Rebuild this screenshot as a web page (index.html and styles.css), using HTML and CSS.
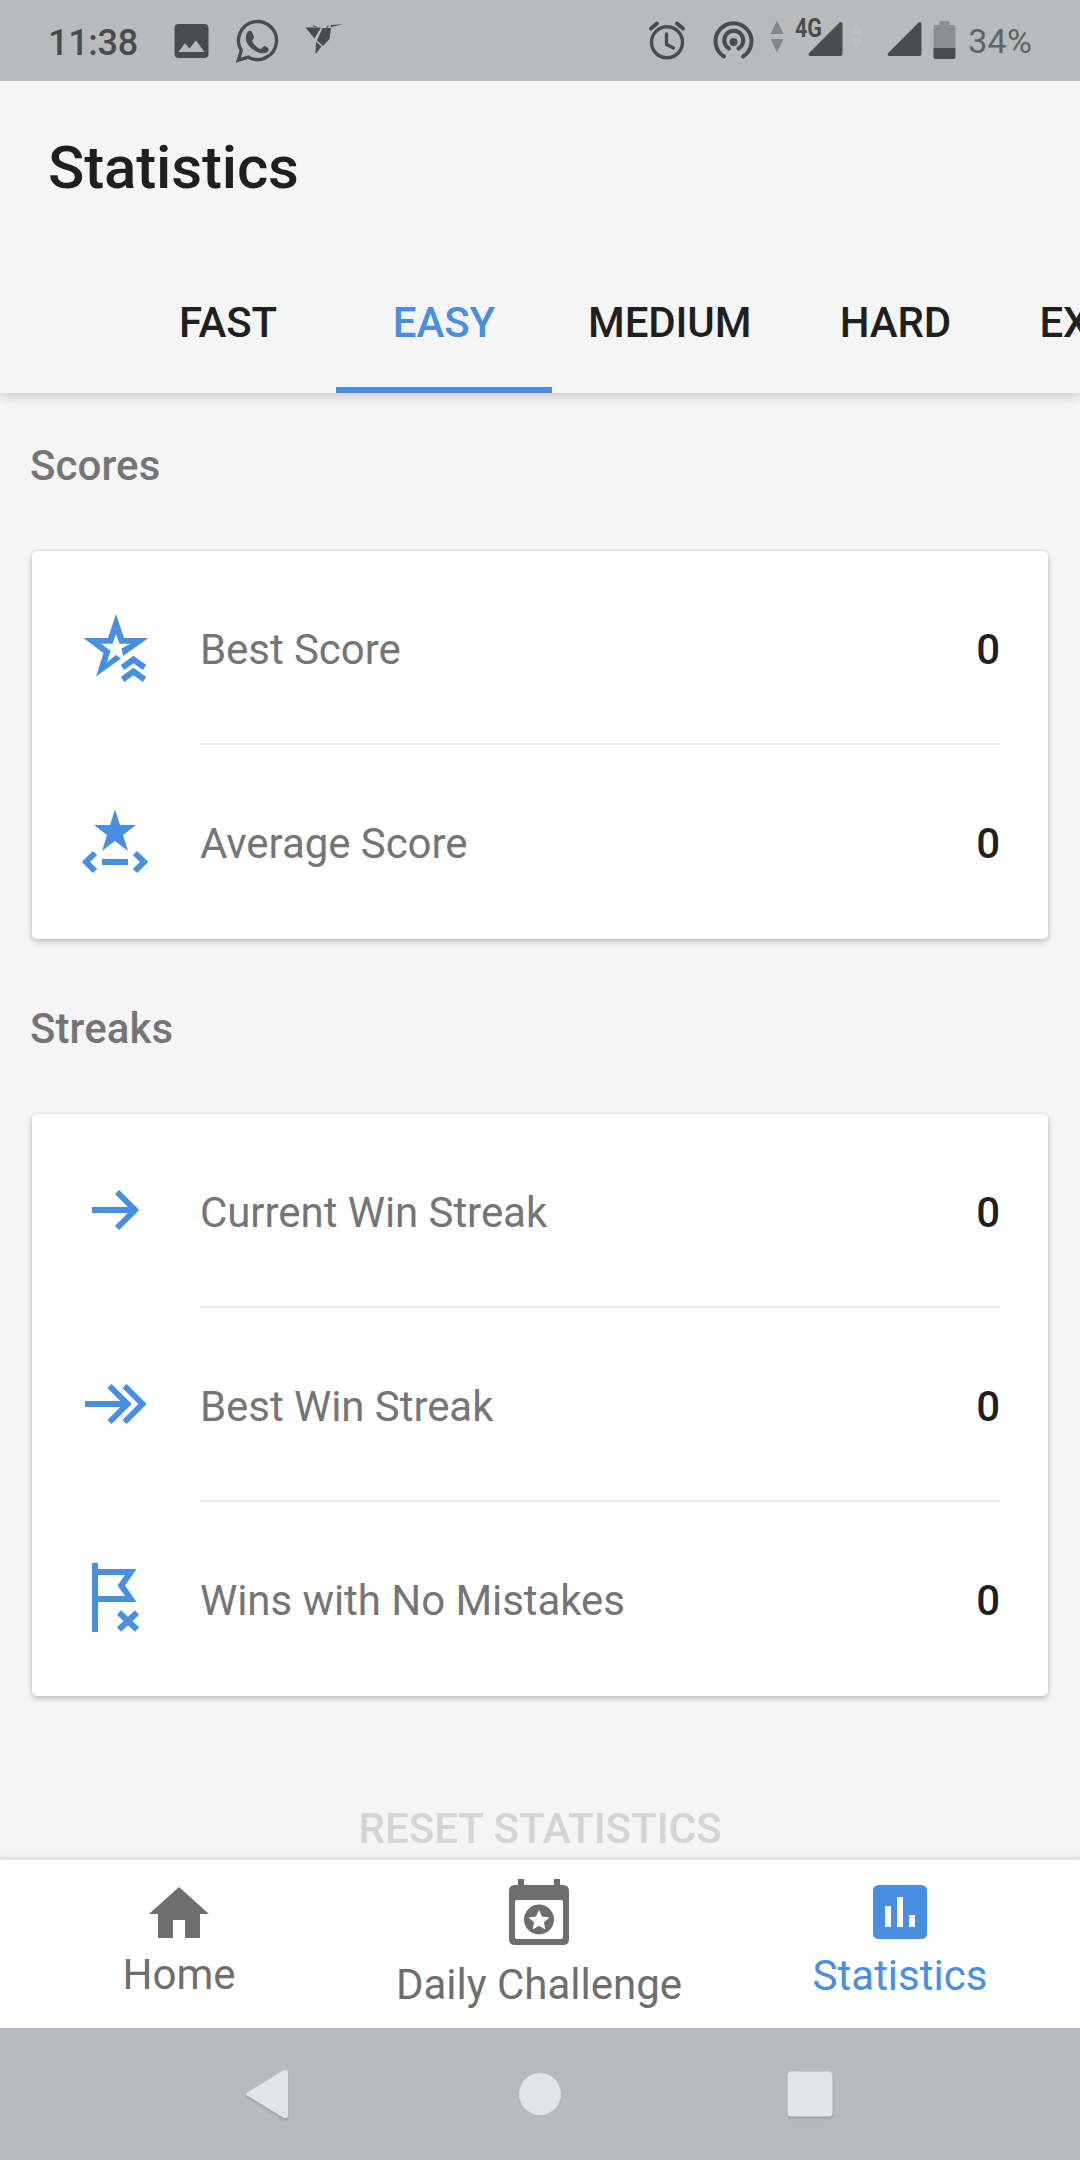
FILE: index.html
```html
<!DOCTYPE html>
<html lang="en">
<head>
<meta charset="utf-8">
<title>Statistics</title>
<link rel="stylesheet" href="styles.css">
</head>
<body>
<div class="screen">
  <header class="status">
    <span class="clock">11:38</span>
    <svg class="notifications" width="180" height="81" viewBox="170 0 180 81">
      <path fill-rule="evenodd" d="M179 24h26a4 4 0 0 1 4 4v26a4 4 0 0 1-4 4h-26a4 4 0 0 1-4-4V28a4 4 0 0 1 4-4zM179 52h26l-8.600-11.500-6.300 8-4.700-5.200z"/>
      <path class="line" d="M238.800 60.200l3-9.700a19 19 0 1 1 7 6.700z"/>
      <path d="M248.500 31.500c1-1 3.300-1 4 .5l2 5c.3 1.500-2 3-2 4 2 4 5 6.500 8.500 8 1.500 0 2.800-3.500 4.500-3l3.200 2c1 .8.500 3-1 4.200-7 4-20-4.500-21.200-12.500-.5-3.500.4-6.500 2-8.200z"/>
      <path d="M306 27.500h15.500L315 38.500zM323 28h8.500l-1.500 11-6.500 7-6-5.500zM316.500 41.500l5.500 5-6 7.500zM313 25l5 1.800h-4zM326 27.500l3-2.300v2.300zM331.500 25l12-.8-12.500 3z"/>
    </svg>
    <svg class="indicators" width="318" height="81" viewBox="642 0 318 81">
      <g class="line">
        <circle cx="667.500" cy="42.300" r="15.500"/>
        <path stroke-linecap="round" stroke-linejoin="round" d="M667 34v10.500l7 3.500"/>
        <path stroke-width="4" stroke-linecap="round" d="M651.500 28.500l6-5M683.500 28.500l-6-5M724.500 56.500a18 18 0 1 1 19 0M729.500 48.500a9.500 9.500 0 1 1 9.500 0"/>
      </g>
      <circle cx="734" cy="42" r="4"/>
      <path class="mid" d="M771 34l6.500-13.300L784 34zM771 39h13l-6.500 13.300z"/>
      <path class="faint" d="M851 34l6-13 6 13zM851 39h12l-6 12z"/>
      <path d="M843 24v30a2 2 0 0 1-2 2h-30c-2 0-2.500-1.700-1.300-3L840 22.600c1.500-1.200 3-.6 3 1.400zM922 24v30a2 2 0 0 1-2 2h-30c-2 0-2.500-1.700-1.300-3L919 22.600c1.500-1.200 3-.6 3 1.400z"/>
      <text class="network" x="795.500" y="37.300" textLength="27" lengthAdjust="spacingAndGlyphs">4G</text>
      <path class="battery-empty" d="M940 21h10v4h4q2 0 2 2v21h-22V27q0-2 2-2h4z"/>
      <path d="M934 48h22v9q0 2-2 2h-18q-2 0-2-2z"/>
    </svg>
    <span class="charge">34%</span>
  </header>

  <div class="appbar">
    <h1 class="title">Statistics</h1>
    <nav class="tabs">
      <span class="tab">FAST</span>
      <span class="tab active">EASY</span>
      <span class="tab">MEDIUM</span>
      <span class="tab">HARD</span>
      <span class="tab">EXPERT</span>
    </nav>
  </div>

  <main class="content">
    <h2 class="heading">Scores</h2>
    <section class="card">
      <div class="row">
        <svg class="icon" viewBox="0 0 72 72">
          <path fill-rule="evenodd" d="M37 2l8 24h24.500L44 44l-1.500-7.500L51.500 31.700H40.500L37 22l-3.500 9.700H22l9.500 7-3.500 11.500L37 43l5 3.500L17 64.500l7.500-23.500L4.500 26h24.500z"/>
          <path class="chevrons" d="M43.500 55.500l11-8 11 8M43.500 67.500l11-8 11 8"/>
        </svg>
        <div class="cell"><span>Best Score</span><b>0</b></div>
      </div>
      <div class="row">
        <svg class="icon" viewBox="0 0 72 72">
          <path d="M36 3.500l5 15.500h16L44 29l5 16-13-10-13 10 5-16L15 19h16zM23 53h26v6H23z"/>
          <path class="ends" d="M16 47l-9 9 9 9M56 47l9 9-9 9"/>
        </svg>
        <div class="cell"><span>Average Score</span><b>0</b></div>
      </div>
    </section>

    <h2 class="heading">Streaks</h2>
    <section class="card">
      <div class="row">
        <svg class="icon" viewBox="0 0 72 72"><path class="arrow" d="M13 35h42M38 17l18 18-18 18"/></svg>
        <div class="cell"><span>Current Win Streak</span><b>0</b></div>
      </div>
      <div class="row">
        <svg class="icon" viewBox="0 0 72 72"><path class="arrow" d="M6 35h42M30.500 17l18 18-18 18M45.500 17l18 18-18 18"/></svg>
        <div class="cell"><span>Best Win Streak</span><b>0</b></div>
      </div>
      <div class="row">
        <svg class="icon" viewBox="0 0 72 72">
          <path fill-rule="evenodd" d="M13 0h6v6h38.500L46 22.500 57.500 39H19v30h-6zM19 12v21h27l-7.500-10.500L46 12z"/>
          <path class="cross" d="M40 49.500l18 17M58 49.500l-18 17"/>
        </svg>
        <div class="cell"><span>Wins with No Mistakes</span><b>0</b></div>
      </div>
    </section>
    <div class="reset">RESET STATISTICS</div>
  </main>

  <nav class="bottom">
    <div class="item home">
      <svg width="60" height="51" viewBox="0 0 60 51"><path d="M30 0l30 27h-9v24H36V33H24v18H9V27H0z"/></svg>
      <span>Home</span>
    </div>
    <div class="item daily">
      <svg width="60" height="66" viewBox="0 0 60 66"><path fill-rule="evenodd" d="M9 0h6v6h30V0h6v6h3q6 0 6 6v48q0 6-6 6H6q-6 0-6-6V12q0-6 6-6h3zM8 21q-2 0-2 2v35q0 2 2 2h44q2 0 2-2V23q0-2-2-2zM30 25.500a15 15 0 1 1 0 30a15 15 0 0 1 0-30zM30 31l-3 6.500-7.500.9 5.600 4.900-1.500 7.100 6.400-3.600 6.400 3.600-1.500-7.100 5.600-4.900-7.500-.9z"/></svg>
      <span>Daily Challenge</span>
    </div>
    <div class="item stats">
      <svg width="54" height="54" viewBox="0 0 54 54"><path fill-rule="evenodd" d="M6 0h42q6 0 6 6v42q0 6-6 6H6q-6 0-6-6V6q0-6 6-6zM12 21v21h6V21zM24 12v30h6V12zM36 30v12h6V30z"/></svg>
      <span>Statistics</span>
    </div>
  </nav>

  <footer class="system">
    <svg width="48" height="56" viewBox="0 0 48 56"><path d="M4.500 26.200L40 4.500q5-2 5 2.500v42q0 4.500-5 2.500L4.500 29.800q-3-1.800 0-3.600z"/></svg>
    <svg class="circle" width="44" height="44" viewBox="0 0 44 44"><circle cx="22" cy="22" r="21"/></svg>
    <svg width="48" height="48" viewBox="0 0 48 48"><rect x="1.500" y="1.500" width="45" height="45" rx="4"/></svg>
  </footer>
</div>
</body>
</html>
```
FILE: styles.css
```css
* { box-sizing: border-box; }
body { margin: 0; font-family: Roboto, "Noto Sans", sans-serif; }
h1, h2 { margin: 0; font-weight: 500; }
svg { display: block; flex: none; }
.screen {
  width: 1080px; height: 2160px; overflow: hidden;
  display: flex; flex-direction: column;
  background: #f5f5f5; color: #1f1f1f;
}

.status {
  position: relative; z-index: 1;
  height: 81px; flex: none; display: flex; align-items: center;
  padding: 0 48px; background: #b7bbbd;
}
.status svg { fill: #4a4b4c; }
.status .line { fill: none; stroke: #4a4b4c; stroke-width: 3.4; }
.status .mid { fill: #858686; }
.status .faint { fill: #bec0c1; }
.status .battery-empty { fill: #8a8e90; }
.network { font: 700 25px Roboto, sans-serif; }
.clock { width: 122px; padding-top: 4px; font-size: 36px; font-weight: 500; letter-spacing: -.3px; color: #4a4b4c; }
.indicators { margin-left: 292px; }
.charge { padding: 1px 0 0 9px; font-size: 34px; letter-spacing: .2px; color: #606364; }
.notifications, .indicators { transform: translateX(.5px); }

.appbar {
  position: relative; flex: none; height: 312px;
  display: flex; flex-direction: column; justify-content: space-between;
  background: #f5f5f5; box-shadow: 0 2px 12px rgba(0, 0, 0, .22);
}
.title { padding: 52px 48px 0; font-size: 60px; line-height: 70px; letter-spacing: -.15px; }
.tabs { display: flex; height: 144px; padding-left: 120px; }
.tab {
  flex: none; min-width: 216px; padding: 0 36px;
  font-size: 42px; font-weight: 500; line-height: 147px; letter-spacing: -.1px; text-align: center;
}
.tab.active { color: #488fe1; border-bottom: 6px solid #488fe1; }

.content { flex: 1; min-height: 0; overflow: hidden; }
.heading { height: 158px; padding: 49px 30px 0; font-size: 42px; line-height: 48px; letter-spacing: .1px; color: #757575; }
.card + .heading { height: 175px; padding-top: 66px; }
.card {
  margin: 0 32px; padding: 0 48px 0 47px; border-radius: 5px;
  background: #fff; box-shadow: 0 3px 6px rgba(0, 0, 0, .2), 0 0 3px rgba(0, 0, 0, .12);
}
.row { display: flex; height: 194px; align-items: center; }
.icon { width: 72px; height: 72px; fill: #488fe1; }
.icon path[class] { fill: none; stroke: #488fe1; stroke-width: 6; }
.cell {
  flex: 1; height: 194px; margin-left: 49px; padding-top: 4px;
  display: flex; align-items: center; justify-content: space-between;
  border-bottom: 2px solid #ebebeb; font-size: 42px; letter-spacing: -.06px; color: #757575;
}
.row:last-child .cell { border-color: transparent; }
.cell b { font-weight: 500; color: #1f1f1f; }
.reset {
  padding-top: 108px; font-size: 42px; font-weight: 500; line-height: 50px;
  letter-spacing: .05px; text-align: center; color: #d4d4d4;
}

.bottom {
  position: relative; flex: none; height: 171px;
  display: grid; grid-template-columns: repeat(3, 1fr);
  border-top: 3px solid #e5e5e5; background: #fff;
  box-shadow: 0 -1px 8px rgba(0, 0, 0, .04);
}
.item {
  display: flex; flex-direction: column; align-items: center;
  font-size: 42px; line-height: 50px; color: #6e6e6e; fill: #6e6e6e;
}
.home { padding: 27px 2px 0 0; gap: 12px; }
.daily { padding: 19px 2px 0 0; gap: 15px; }
.stats { padding-top: 25px; gap: 12px; color: #488fe1; fill: #488fe1; }

.system {
  height: 132px; flex: none; padding: 0 246px 0 243px;
  display: flex; align-items: center; justify-content: space-between;
  background: #b7bbbd;
}
.system svg { fill: #e2e4e6; filter: drop-shadow(0 2px 1px rgba(0, 0, 0, .14)); }
.system .circle { filter: none; margin-left: 2px; }
```
